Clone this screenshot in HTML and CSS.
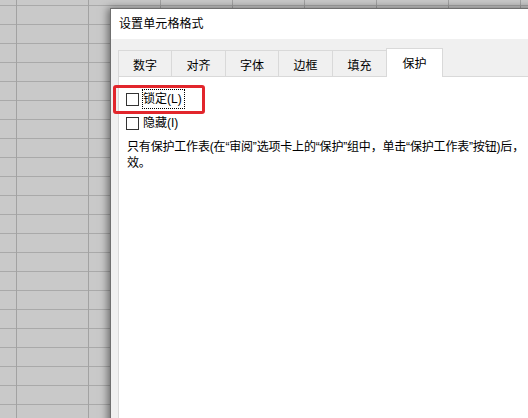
FILE: index.html
```html
<!DOCTYPE html>
<html lang="zh-CN">
<head>
<meta charset="utf-8">
<title>设置单元格格式</title>
<link rel="stylesheet" href="styles.css">
</head>
<body>
<div class="dialog">
  <div class="titlebar">设置单元格格式</div>
  <div class="dialog-body">
    <div class="tabs">
      <div class="tab">数字</div>
      <div class="tab">对齐</div>
      <div class="tab">字体</div>
      <div class="tab">边框</div>
      <div class="tab">填充</div>
      <div class="tab active">保护</div>
    </div>
    <div class="panel">
      <div class="check-row">
        <span class="box"></span>
        <span class="label focused">锁定(L)</span>
      </div>
      <div class="check-row">
        <span class="box"></span>
        <span class="label">隐藏(I)</span>
      </div>
      <p class="note"><span class="line">只有保护工作表(在“审阅”选项卡上的“保护”组中，单击“保护工作表”按钮)后，</span><span class="line">效。</span></p>
    </div>
  </div>
</div>
<div class="highlight"></div>
</body>
</html>
```
FILE: styles.css
```css
html, body {
  margin: 0;
  padding: 0;
  width: 528px;
  height: 418px;
  overflow: hidden;
}

body {
  font-family: "Liberation Sans", "Noto Sans CJK SC", sans-serif;
  font-size: 12px;
  color: #000;
  background-color: #c9c9c9;
  background-image:
    linear-gradient(to right, #a2a2a2 1px, transparent 1px),
    linear-gradient(to bottom, #a9a9a9 1px, transparent 1px);
  background-size: 72px 19px;
  background-position: 16px 5px;
}

.dialog {
  position: absolute;
  left: 110px;
  top: 8px;
  width: 470px;
  height: 440px;
  border: 1px solid #6f6f6f;
  background: #f0f0f0;
  box-shadow: -2px 0 8px rgba(0, 0, 0, 0.5);
  display: flex;
  flex-direction: column;
}

.titlebar {
  height: 30px;
  line-height: 30px;
  padding-left: 8px;
  background: #ffffff;
  font-size: 12px;
  letter-spacing: 0.1px;
}

.dialog-body {
  flex: 1;
  padding: 9px 0 0 7px;
  display: flex;
  flex-direction: column;
}

.tabs {
  display: flex;
  align-items: flex-end;
  height: 28px;
}

.tab {
  box-sizing: border-box;
  width: 55px;
  height: 26px;
  margin-left: -1px;
  border: 1px solid #d9d9d9;
  border-bottom: none;
  background: #f0f0f0;
  display: flex;
  align-items: center;
  justify-content: center;
  padding-top: 1px;
}

.tab:first-child {
  margin-left: 0;
  width: 54px;
}

.tab:nth-child(3) {
  width: 54px;
}

.tab.active {
  width: 57px;
  height: 29px;
  margin-bottom: -1px;
  background: #ffffff;
  position: relative;
  z-index: 1;
  padding-top: 0;
  padding-bottom: 1px;
}

.panel {
  flex: 1;
  background: #ffffff;
  border: 1px solid #d9d9d9;
  border-right: none;
  border-bottom: none;
  padding: 10px 0 0 7px;
}

.check-row {
  display: flex;
  align-items: center;
  height: 24px;
  gap: 3px;
}

.box {
  box-sizing: border-box;
  width: 13px;
  height: 13px;
  border: 1px solid #333333;
  background: #ffffff;
  flex: none;
}

.label {
  line-height: 18px;
  padding: 0 2px 0 0;
  border: 1px dotted transparent;
}

.label.focused {
  border-color: #000000;
}

.note {
  margin: 4px 0 0 1px;
  line-height: 16px;
  letter-spacing: -0.18px;
}

.line {
  display: block;
  white-space: nowrap;
}

.highlight {
  position: absolute;
  left: 113px;
  top: 85px;
  width: 92px;
  height: 29px;
  box-sizing: border-box;
  border: 3px solid #e2262c;
  border-radius: 3px;
}
```
